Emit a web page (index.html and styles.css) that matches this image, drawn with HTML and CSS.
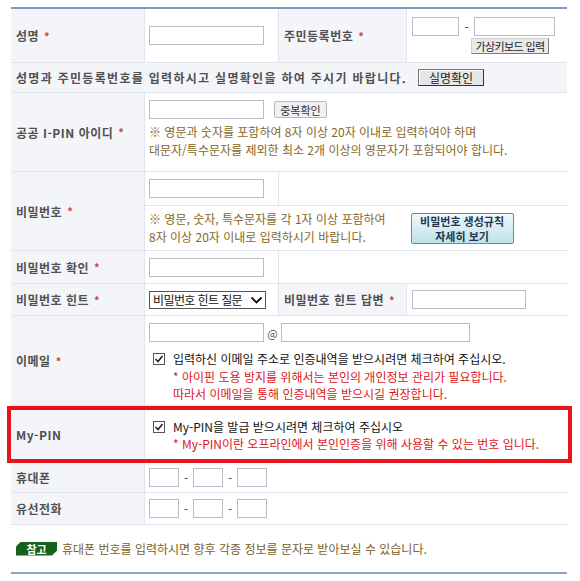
FILE: index.html
```html
<!DOCTYPE html>
<html lang="ko">
<head>
    <meta charset="UTF-8">
    <meta name="viewport" content="width=device-width, initial-scale=1.0">
    <title>회원가입</title>
    <link rel="stylesheet" href="styles.css">
</head>
<body>

    <div class="form">
        <div class="row r-name">
            <div class="th">성명 <em>*</em></div>
            <div class="td line"><input class="txt w115" type="text"></div>
            <div class="th">주민등록번호 <em>*</em></div>
            <div class="td jumin">
                <div class="jumin-in">
                    <input class="txt w46" type="text">
                    <span class="dash">-</span>
                    <input class="txt w80" type="text">
                </div>
                <button class="btn btn-key">가상키보드 입력</button>
            </div>
        </div>

        <div class="row r-real">
            <div class="th full">
                성명과 주민등록번호를 입력하시고 실명확인을 하여 주시기 바랍니다.
                <button class="btn btn-real">실명확인</button>
            </div>
        </div>

        <div class="row r-ipin">
            <div class="th">공공 I-PIN 아이디 <em>*</em></div>
            <div class="td span3 top">
                <div class="inline">
                    <input class="txt w115" type="text">
                    <button class="btn btn-dup">중복확인</button>
                </div>
                <p class="note">※ 영문과 숫자를 포함하여 8자 이상 20자 이내로 입력하여야 하며<br>대문자/특수문자를 제외한 최소 2개 이상의 영문자가 포함되어야 합니다.</p>
            </div>
        </div>

        <div class="row r-pw">
            <div class="th th-pw">비밀번호 <em>*</em></div>
            <div class="td line"><input class="txt w115" type="password"></div>
            <div class="td blank"></div>
            <div class="td pw-rule">
                <p class="note">※ 영문, 숫자, 특수문자를 각 1자 이상 포함하여<br>8자 이상 20자 이내로 입력하시기 바랍니다.</p>
                <button class="btn btn-rule">비밀번호 생성규칙<br>자세히 보기</button>
            </div>
        </div>

        <div class="row r-pw2">
            <div class="th">비밀번호 확인 <em>*</em></div>
            <div class="td line"><input class="txt w115" type="password"></div>
            <div class="td blank"></div>
        </div>

        <div class="row r-hint">
            <div class="th">비밀번호 힌트 <em>*</em></div>
            <div class="td line">
                <div class="select">
                    <span>비밀번호 힌트 질문</span>
                    <svg width="13" height="10" viewBox="0 0 13 10"><path d="M1.5 2.5 L6.5 7.5 L11.5 2.5" fill="none" stroke="#111" stroke-width="1.8"/></svg>
                </div>
            </div>
            <div class="th">비밀번호 힌트 답변 <em>*</em></div>
            <div class="td"><input class="txt w113" type="text"></div>
        </div>

        <div class="row r-mail">
            <div class="th">이메일 <em>*</em></div>
            <div class="td span3 top">
                <div class="inline">
                    <input class="txt w115" type="text">
                    <span class="at">@</span>
                    <input class="txt w188" type="text">
                </div>
                <div class="check">
                    <svg class="box" width="12" height="12" viewBox="0 0 12 12"><rect x="0.5" y="0.5" width="11" height="11" fill="#fff" stroke="#555"/><path d="M2.5 6 L5 8.5 L9.5 3" fill="none" stroke="#222" stroke-width="1.6"/></svg>
                    <div>
                        <p class="black">입력하신 이메일 주소로 인증내역을 받으시려면 체크하여 주십시오.</p>
                        <p class="red">* 아이핀 도용 방지를 위해서는 본인의 개인정보 관리가 필요합니다.<br>따라서 이메일을 통해 인증내역을 받으시길 권장합니다.</p>
                    </div>
                </div>
            </div>
        </div>

        <div class="row r-mypin">
            <div class="th">My-PIN</div>
            <div class="td span3">
                <div class="check">
                    <svg class="box" width="12" height="12" viewBox="0 0 12 12"><rect x="0.5" y="0.5" width="11" height="11" fill="#fff" stroke="#555"/><path d="M2.5 6 L5 8.5 L9.5 3" fill="none" stroke="#222" stroke-width="1.6"/></svg>
                    <div>
                        <p class="black">My-PIN을 발급 받으시려면 체크하여 주십시오</p>
                        <p class="red">* My-PIN이란 오프라인에서 본인인증을 위해 사용할 수 있는 번호 입니다.</p>
                    </div>
                </div>
            </div>
        </div>

        <div class="row r-phone">
            <div class="th">휴대폰</div>
            <div class="td span3">
                <input class="txt w30" type="text"><span class="dash">-</span><input class="txt w30" type="text"><span class="dash">-</span><input class="txt w30" type="text">
            </div>
        </div>

        <div class="row r-tel">
            <div class="th">유선전화</div>
            <div class="td span3">
                <input class="txt w30" type="text"><span class="dash">-</span><input class="txt w30" type="text"><span class="dash">-</span><input class="txt w30" type="text">
            </div>
        </div>

        <div class="info">
            <span class="badge">참고</span>
            휴대폰 번호를 입력하시면 향후 각종 정보를 문자로 받아보실 수 있습니다.
        </div>
    </div>

</body>
</html>
```

FILE: styles.css
```css
body {
    margin: 0;
    padding: 0;
    background: #fff;
    font-family: "Noto Sans CJK KR", "DejaVu Sans", sans-serif;
    font-size: 12px;
    color: #333;
}
p {
    margin: 0;
}
.form {
    width: 556px;
    margin: 7px 13px 0 11px;
    border-top: 2px solid #7f98c4;
    border-bottom: 2px solid #8ea2c8;
}
.row {
    display: grid;
    grid-template-columns: 134px 134px 128px 1fr;
    border-bottom: 1px solid #e0e4ee;
    box-sizing: border-box;
}
.th {
    display: flex;
    align-items: center;
    padding-left: 5px;
    background: #f4f5f9;
    border-right: 1px solid #e0e4ee;
    color: #505050;
    font-weight: bold;
    letter-spacing: 0.5px;
}
.th em {
    font-style: normal;
    color: #d04040;
    margin-left: 5px;
    font-size: 11px;
}
.td {
    display: flex;
    align-items: center;
    padding-left: 4px;
    background: #fff;
}
.line {
    border-right: 1px solid #e0e4ee;
}
.span3 {
    grid-column: 2 / 5;
}
.top {
    flex-direction: column;
    align-items: flex-start;
    justify-content: flex-start;
    padding-top: 7px;
}
.full {
    grid-column: 1 / 5;
    border-right: none;
    letter-spacing: 1.3px;
}

.txt {
    box-sizing: border-box;
    height: 19px;
    margin: 0;
    padding: 0 2px;
    border: 1px solid #b8bcc6;
    background: #fff;
    font-size: 12px;
}
.w30 { width: 30px; }
.w46 { width: 47px; }
.w80 { width: 81px; }
.w113 { width: 114px; }
.w115 { width: 115px; }
.w188 { width: 189px; }

.dash {
    display: inline-block;
    width: 14px;
    text-align: center;
    color: #444;
}
.at {
    display: inline-block;
    width: 17px;
    text-align: center;
    color: #555;
    font-size: 11px;
}
.inline {
    display: flex;
    align-items: center;
}

.btn {
    font-family: inherit;
    font-size: 12px;
    line-height: 14px;
    margin: 0;
    padding: 0 4px;
    cursor: pointer;
    color: #222;
    letter-spacing: 0;
}
.btn-key {
    width: 78px;
    height: 16px;
    padding: 0;
    margin-left: 59px;
    margin-top: 2px;
    background: #e9e9e9;
    border: 1px solid;
    border-color: #cfcfcf #7d7d7d #7d7d7d #cfcfcf;
    font-size: 11px;
    letter-spacing: -0.6px;
    white-space: nowrap;
}
.btn-real {
    height: 17px;
    width: 66px;
    margin-left: 11px;
    background: #e6e6e6;
    border: 1px solid;
    border-color: #777 #333 #333 #777;
    box-shadow: inset 1px 1px 0 #fff;
    font-weight: normal;
}
.btn-dup {
    height: 17px;
    width: 53px;
    margin-left: 10px;
    padding: 0;
    background: #f1f1f1;
    border: 1px solid #b9b9b9;
    border-radius: 2px;
    font-size: 11px;
    color: #333;
}
.btn-rule {
    width: 103px;
    height: 31px;
    margin-left: 25px;
    padding: 0;
    background: linear-gradient(#eef8fb, #bfe1ea);
    border: 1px solid #5f8ea6;
    border-radius: 2px;
    font-weight: bold;
    font-size: 11px;
    color: #1f3550;
    line-height: 15px;
    white-space: nowrap;
}

.jumin {
    flex-direction: column;
    align-items: flex-start;
    justify-content: center;
    padding-left: 5px;
}
.jumin-in {
    display: flex;
    align-items: center;
}
.jumin-in .dash {
    width: 15px;
}

.note {
    margin-top: 4px;
    color: #866628;
    line-height: 18px;
}

.r-name { height: 54px; }
.r-real { height: 30px; }
.r-ipin { height: 79px; }
.r-pw {
    height: 79px;
    grid-template-rows: 33px 1fr;
}
.th-pw {
    grid-row: 1 / 3;
}
.r-pw .blank {
    grid-column: 3 / 5;
}
.pw-rule {
    grid-column: 2 / 5;
    border-top: 1px solid #e0e4ee;
}
.pw-rule .note {
    margin-top: 0;
}
.r-pw2 { height: 33px; }
.r-pw2 .blank {
    grid-column: 3 / 5;
}
.r-hint { height: 32px; }
.r-hint .td:last-child {
    padding-left: 5px;
}
.r-mail { height: 90px; }
.r-mypin {
    position: relative;
    height: 57px;
    border-bottom: none;
}
.r-mypin::after {
    content: "";
    position: absolute;
    top: 0;
    bottom: 0;
    left: -4px;
    right: -5px;
    border: 4px solid #e8141c;
    pointer-events: none;
}
.r-phone { height: 30px; }
.r-tel { height: 32px; }

.select {
    box-sizing: border-box;
    width: 117px;
    height: 18px;
    border: 1px solid #555;
    display: flex;
    align-items: center;
    justify-content: space-between;
    padding: 0 2px 0 3px;
    color: #111;
    font-size: 12px;
    letter-spacing: -0.6px;
    white-space: nowrap;
    overflow: hidden;
}
.select svg {
    flex: none;
}

.check {
    display: flex;
    align-items: flex-start;
    margin-top: 8px;
    padding-left: 4px;
}
.check .box {
    margin-top: 3px;
    margin-right: 8px;
    flex: none;
}
.black {
    color: #111;
    line-height: 18px;
}
.red {
    color: #e0141c;
    line-height: 17px;
}
.r-mypin .check {
    margin-top: 0;
}
.r-mypin .red {
    line-height: 16px;
}

.info {
    height: 47px;
    display: flex;
    align-items: center;
    padding-left: 5px;
    color: #7a5f28;
}
.badge {
    display: inline-block;
    width: 41px;
    height: 14px;
    line-height: 14px;
    margin-right: 5px;
    background: #16621c;
    color: #fff;
    font-size: 11px;
    font-weight: bold;
    text-align: center;
    clip-path: polygon(5px 0, 100% 0, 100% 9px, 36px 100%, 0 100%, 0 5px);
}
```
